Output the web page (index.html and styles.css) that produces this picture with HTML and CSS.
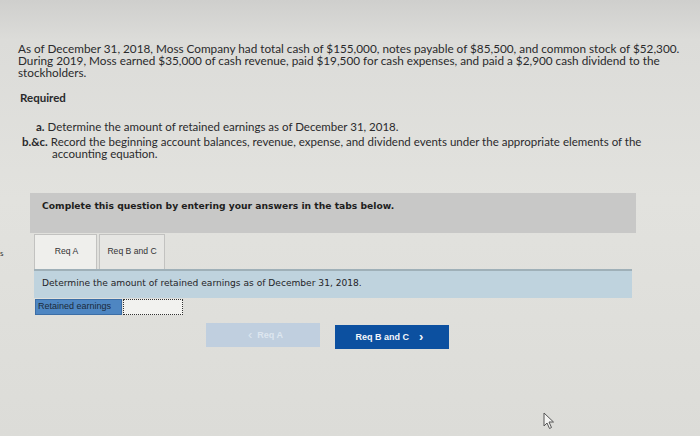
FILE: index.html
```html
<!DOCTYPE html>
<html>
<head>
<meta charset="utf-8">
<link rel="stylesheet" href="styles.css">
</head>
<body>
<div class="page">
  <p class="intro">As of December 31, 2018, Moss Company had total cash of $155,000, notes payable of $85,500, and common stock of $52,300. During 2019, Moss earned $35,000 of cash revenue, paid $19,500 for cash expenses, and paid a $2,900 cash dividend to the stockholders.</p>
  <h2 class="required">Required</h2>
  <ol class="reqs">
    <li class="req-a"><b>a.</b> Determine the amount of retained earnings as of December 31, 2018.</li>
    <li class="req-bc"><b>b.&amp;c.</b> Record the beginning account balances, revenue, expense, and dividend events under the appropriate elements of the accounting equation.</li>
  </ol>
  <div class="widget">
    <div class="banner">Complete this question by entering your answers in the tabs below.</div>
    <div class="tabs">
      <div class="tab active">Req A</div>
      <div class="tab">Req B and C</div>
    </div>
    <div class="prompt">Determine the amount of retained earnings as of December 31, 2018.</div>
    <div class="answer">
      <div class="label">Retained earnings</div>
      <div class="input"></div>
    </div>
    <div class="nav">
      <div class="btn prev"><span class="chev">&lsaquo;</span> Req A</div>
      <div class="btn next">Req B and C <span class="chev">&rsaquo;</span></div>
    </div>
  </div>
  <span class="edge">s</span>
  <svg class="cursor" width="12" height="18" viewBox="0 0 12 18"><path d="M1 1 L1 14 L4 11 L6.5 16.5 L8.5 15.5 L6 10 L10.5 10 Z" fill="#f4f4f2" stroke="#555" stroke-width="1"/></svg>
</div>
</body>
</html>
```
FILE: styles.css
```css
html, body {
  margin: 0;
  padding: 0;
}
body {
  width: 700px;
  height: 436px;
  overflow: hidden;
  background: linear-gradient(180deg, #cfcfcd 0px, #dcdcd9 40px, #e2e2de 200px, #dcdcd8 436px);
  color: #2a2a2c;
  font-family: Lato, "Open Sans", sans-serif;
}
.page {
  position: relative;
  height: 436px;
  padding: 43px 0 0 18px;
  box-sizing: border-box;
}
.intro {
  margin: 0;
  width: 670px;
  font-size: 11.75px;
  line-height: 12px;
}
.required {
  margin: 12px 0 0 2px;
  font-size: 11.5px;
  font-weight: 700;
  line-height: 14px;
}
.reqs {
  list-style: none;
  margin: 16px 0 0 0;
  padding: 0;
  font-size: 11.5px;
  line-height: 12px;
}
.req-a { padding-left: 18px; margin-bottom: 3px; }
.req-bc { padding-left: 34px; text-indent: -30px; width: 630px; }
.widget {
  margin: 33px 0 0 12px;
  width: 606px;
  font-family: "DejaVu Sans", Verdana, sans-serif;
}
.banner {
  background: #c8c8c7;
  height: 40px;
  box-sizing: border-box;
  padding: 7px 0 0 12px;
  font-size: 9.2px;
  font-weight: 700;
  color: #1e1e20;
}
.tabs {
  display: flex;
  gap: 2px;
  margin: 1px 0 0 4px;
  height: 35px;
  align-items: stretch;
}
.tab {
  border: 1px solid #c2c2c0;
  border-bottom: none;
  background: #e6e6e3;
  font-family: "Liberation Sans", Arial, sans-serif;
  font-size: 8.6px;
  color: #333;
  display: flex;
  align-items: center;
  justify-content: center;
  padding-bottom: 2px;
  box-sizing: border-box;
  width: 66px;
}
.tab.active {
  width: 63px;
  background: #efefec;
  padding-left: 2px;
}
.prompt {
  margin: 0 0 0 4px;
  width: 598px;
  height: 29px;
  box-sizing: border-box;
  background: #bfd3de;
  border-top: 2px solid #9fb0b8;
  padding: 7px 0 0 8px;
  font-size: 9.1px;
  color: #1f2428;
}
.answer {
  display: flex;
  margin: 1px 0 0 5px;
  height: 16px;
}
.label {
  width: 87px;
  background: #4e86c2;
  color: #1b2a3a;
  font-family: "Liberation Sans", Arial, sans-serif;
  font-size: 9px;
  line-height: 13px;
  padding-left: 2px;
  box-sizing: border-box;
  border: 1px solid #3c6ea6;
}
.input {
  width: 60px;
  background: #f2f2ef;
  border: 1px dotted #333;
  box-sizing: border-box;
  margin-left: 1px;
}
.nav {
  display: flex;
  gap: 15px;
  margin: 8px 0 0 176px;
  align-items: flex-start;
}
.btn {
  width: 114px;
  height: 24px;
  display: flex;
  align-items: center;
  justify-content: center;
  font-family: "Liberation Sans", Arial, sans-serif;
  font-size: 9px;
  font-weight: 700;
  box-sizing: border-box;
}
.btn.prev {
  background: #c0cfdf;
  color: #dde6ef;
}
.btn.next {
  margin-top: 2px;
  background: #0c50a0;
  color: #f4f7fb;
}
.chev {
  font-size: 13px;
  font-weight: 400;
  margin: 0 5px;
  line-height: 10px;
}
.btn.next .chev { font-weight: 700; margin-left: 10px; }
.edge {
  position: absolute;
  left: 0;
  top: 248px;
  font-size: 8px;
  color: #333;
}
.cursor {
  position: absolute;
  left: 543px;
  top: 412px;
}
```
